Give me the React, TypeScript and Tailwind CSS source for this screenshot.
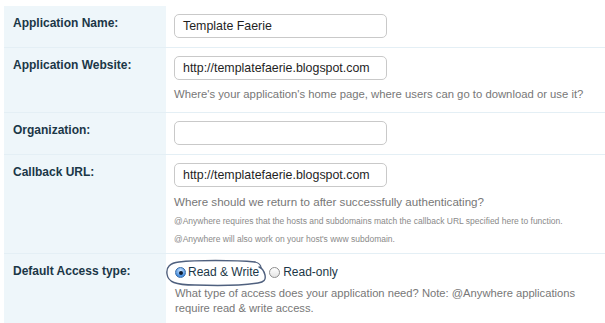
const font = { fontFamily: '"Liberation Sans", Arial, Helvetica, sans-serif' };

type Row = {
  label: string;
  value?: string;
  help?: string;
  helpClass?: string;
  notes?: string[];
};

const rows: Row[] = [
  { label: "Application Name:", value: "Template Faerie" },
  {
    label: "Application Website:",
    value: "http://templatefaerie.blogspot.com",
    help: "Where's your application's home page, where users can go to download or use it?",
    helpClass: "mt-[7px] pb-[2px] text-[11.3px] leading-[14px] text-[#777777]",
  },
  { label: "Organization:", value: "" },
  {
    label: "Callback URL:",
    value: "http://templatefaerie.blogspot.com",
    help: "Where should we return to after successfully authenticating?",
    helpClass: "mt-[8px] text-[11.6px] leading-[14px] text-[#777777]",
    notes: [
      "@Anywhere requires that the hosts and subdomains match the callback URL specified here to function.",
      "@Anywhere will also work on your host's www subdomain.",
    ],
  },
];

function Radio({ checked }: { checked?: boolean }) {
  return (
    <span
      className={
        checked
          ? "flex h-[11px] w-[11px] items-center justify-center rounded-full border border-[#3b6ea8] bg-[radial-gradient(circle_at_50%_30%,#cfe6ff,#4a90e0_70%)]"
          : "flex h-[11px] w-[11px] items-center justify-center rounded-full border border-[#8e8e8e] bg-[linear-gradient(#ffffff,#e4e4e4)]"
      }
    >
      {checked && <span className="h-[4px] w-[4px] rounded-full bg-[#0d1d33]" />}
    </span>
  );
}

function Label({ text }: { text: string }) {
  return (
    <div className="w-[162px] shrink-0 bg-[#eef6fa] pl-[9px] pt-[10px] text-[12px] font-bold leading-[15px] text-[#1b3747]">
      {text}
    </div>
  );
}

export default function App() {
  return (
    <div className="h-[323px] w-[605px] overflow-hidden bg-white pl-[4px] pt-[6px]" style={font}>
      {rows.map((row) => (
        <div key={row.label} className="flex border-b border-[#e4eff5]">
          <Label text={row.label} />
          <div className="pb-[9px] pl-[8px] pt-[8px]">
            <div className="flex h-[24px] w-[213px] items-center rounded-[5px] border border-[#c9c9c9] bg-white px-[8px] text-[12.4px] text-[#1f1f1f]">
              {row.value}
            </div>
            {row.help && <p className={row.helpClass}>{row.help}</p>}
            {row.notes && (
              <div className="mb-[-2px] mt-[5px] flex flex-col gap-[4px]">
                {row.notes.map((n) => (
                  <p key={n} className="text-[8.5px] leading-[14px] text-[#8a8a8a]">
                    {n}
                  </p>
                ))}
              </div>
            )}
          </div>
        </div>
      ))}

      {/* Default access type */}
      <div className="flex h-[80px]">
        <Label text="Default Access type:" />
        <div className="pl-[9px] pt-[11px]">
          <div className="relative flex items-center text-[12px] leading-[15px] text-[#1b3747]">
            <svg
              className="absolute left-[-10px] top-[-6px]"
              width="104"
              height="29"
              viewBox="0 0 104 29"
              fill="none"
              aria-hidden
            >
              <path
                d="M90 3 C70 1 30 1 14 3 C5 4 1 8 2 15 C3 23 10 26 30 26 C55 27 80 26 93 24 C99 23 101 21 100 16 C99 12 97 9 94 8"
                stroke="#4f607e"
                strokeWidth="1.4"
                strokeLinecap="round"
              />
              <path d="M90 3 C94 4 96 6 96 9" stroke="#4f607e" strokeWidth="1.2" strokeLinecap="round" />
            </svg>
            <Radio checked />
            <span className="ml-[2px]">Read &amp; Write</span>
            <span className="ml-[10px]">
              <Radio />
            </span>
            <span className="ml-[3px]">Read-only</span>
          </div>
          <p className="mt-[6px] w-[420px] text-[11.2px] leading-[15px] text-[#777777]">
            What type of access does your application need? Note: @Anywhere applications require
            read &amp; write access.
          </p>
        </div>
      </div>
    </div>
  );
}
